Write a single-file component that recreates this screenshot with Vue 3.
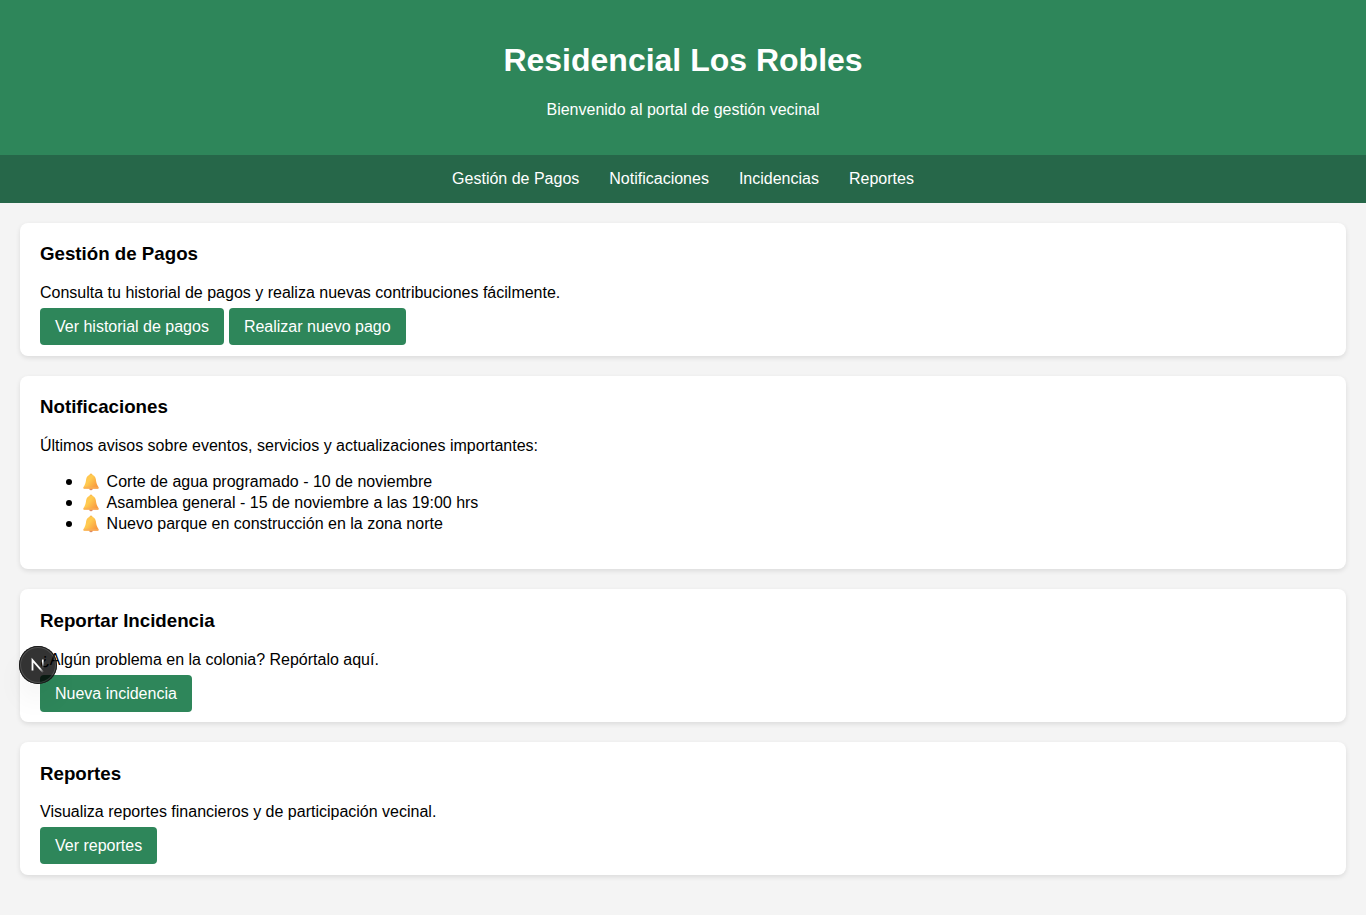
<script setup>
const links = ['Gestión de Pagos', 'Notificaciones', 'Incidencias', 'Reportes']
const notices = [
  'Corte de agua programado - 10 de noviembre',
  'Asamblea general - 15 de noviembre a las 19:00 hrs',
  'Nuevo parque en construcción en la zona norte',
]
const sections = [
  {
    title: 'Gestión de Pagos',
    text: 'Consulta tu historial de pagos y realiza nuevas contribuciones fácilmente.',
    actions: ['Ver historial de pagos', 'Realizar nuevo pago'],
  },
  {
    title: 'Notificaciones',
    text: 'Últimos avisos sobre eventos, servicios y actualizaciones importantes:',
    notices,
  },
  {
    title: 'Reportar Incidencia',
    text: '¿Algún problema en la colonia? Repórtalo aquí.',
    actions: ['Nueva incidencia'],
  },
  {
    title: 'Reportes',
    text: 'Visualiza reportes financieros y de participación vecinal.',
    actions: ['Ver reportes'],
  },
]
</script>

<template>
  <div class="page">
    <header class="header">
      <h1>Residencial Los Robles</h1>
      <p>Bienvenido al portal de gestión vecinal</p>
    </header>
    <nav class="nav">
      <a v-for="link in links" :key="link" href="#">{{ link }}</a>
    </nav>
    <main class="main">
      <section v-for="s in sections" :key="s.title" class="card">
        <h3>{{ s.title }}</h3>
        <p>{{ s.text }}</p>
        <ul v-if="s.notices">
          <li v-for="n in s.notices" :key="n">
            <svg class="bell" viewBox="0 0 20 20" aria-hidden="true">
              <defs>
                <linearGradient id="bellFill" x1="0" y1="0" x2="1" y2="0.7">
                  <stop offset="0" stop-color="#ffc04f" />
                  <stop offset="0.45" stop-color="#ffcb50" />
                  <stop offset="1" stop-color="#f8963f" />
                </linearGradient>
              </defs>
              <circle cx="10" cy="17.4" r="1.9" fill="#dc8a68" />
              <circle cx="10" cy="2.2" r="1.7" fill="#f9b950" />
              <path d="M10 2C7 2 5 4 4.6 7C4.2 10.3 3.8 12.2 2.3 14.6C1.3 16.2 1.3 17.4 2.4 17.4H17.6C18.7 17.4 18.7 16.2 17.7 14.6C16.2 12.2 15.8 10.3 15.4 7C15 4 13 2 10 2Z" fill="url(#bellFill)" />
              <path d="M1.9 15.4H18.1C18.7 16.5 18.5 17.4 17.6 17.4H2.4C1.5 17.4 1.3 16.5 1.9 15.4Z" fill="#f8ad58" opacity="0.7" />
            </svg>
            <span>{{ n }}</span>
          </li>
        </ul>
        <div v-else class="actions">
          <a v-for="a in s.actions" :key="a" href="#" class="button">{{ a }}</a>
        </div>
      </section>
    </main>
    <button class="dev-badge" aria-label="Next.js">
      <svg viewBox="0 0 38 38" fill="none">
        <defs>
          <linearGradient id="diagonal" x1="19" y1="19" x2="25" y2="26" gradientUnits="userSpaceOnUse">
            <stop offset="0.4" stop-color="#fff" />
            <stop offset="1" stop-color="#fff" stop-opacity="0" />
          </linearGradient>
          <linearGradient id="upright" x1="23" y1="13" x2="23" y2="22" gradientUnits="userSpaceOnUse">
            <stop offset="0.3" stop-color="#fff" />
            <stop offset="1" stop-color="#fff" stop-opacity="0" />
          </linearGradient>
        </defs>
        <path d="M13.5 24.5V14.2L24.2 26.4" stroke="url(#diagonal)" stroke-width="1.8" />
        <path d="M23.8 13.5V22" stroke="url(#upright)" stroke-width="1.6" />
      </svg>
    </button>
  </div>
</template>

<style>
body {
  background: #f4f4f4;
}
</style>

<style scoped>
.page {
  font-family: "Liberation Sans", Arial, sans-serif;
  font-size: 16px;
  line-height: 18px;
  color: #000;
}
a {
  color: #fff;
  text-decoration: none;
}
.header {
  box-sizing: border-box;
  height: 155px;
  padding: 42px 20px 20px;
  background: #2e865a;
  color: #fff;
  text-align: center;
}
h1 {
  margin: 0 0 22px;
  font-size: 32px;
  line-height: 37px;
}
p {
  margin: 0 0 16px;
}
.nav {
  display: flex;
  justify-content: center;
  align-items: center;
  gap: 30px;
  height: 48px;
  background: #266749;
}
.main {
  display: flex;
  flex-direction: column;
  gap: 20px;
  padding: 20px;
}
.card {
  padding: 20px;
  border-radius: 8px;
  background: #fff;
  box-shadow: 0 2px 5px rgba(0, 0, 0, 0.1);
}
.card:nth-child(3) {
  padding: 21px 20px 19px;
}
.card:nth-child(4) {
  padding-top: 21px;
}
h3 {
  margin: 0 0 19px;
  font-size: 18.72px;
  line-height: 22px;
}
.card:nth-child(4) h3 {
  margin-bottom: 18px;
}
.actions {
  display: flex;
  gap: 5px;
  margin: -10px 0 -9px;
}
.button {
  padding: 10px 15px 9px;
  border-radius: 4px;
  background: #2e865a;
}
ul {
  margin: 0 0 15px;
  padding-left: 26px;
  list-style: none;
}
li {
  display: flex;
  align-items: center;
  height: 21px;
  line-height: 21px;
}
li::before {
  content: "";
  width: 6px;
  height: 6px;
  margin-top: 1px;
  border-radius: 50%;
  background: #000;
}
.bell {
  width: 18px;
  height: 18px;
  margin: 0 6.6px 0 10px;
}
.dev-badge {
  position: fixed;
  left: 19px;
  top: 646px;
  width: 38px;
  height: 38px;
  padding: 0;
  border: 0;
  border-radius: 50%;
  background: rgba(0, 0, 0, 0.8);
  box-shadow: 0 0 0 1px #171717 inset, 0 0 0 2px rgba(255, 255, 255, 0.14) inset,
    0 16px 32px -8px rgba(0, 0, 0, 0.14);
}
.dev-badge svg {
  display: block;
  width: 38px;
  height: 38px;
}
</style>
